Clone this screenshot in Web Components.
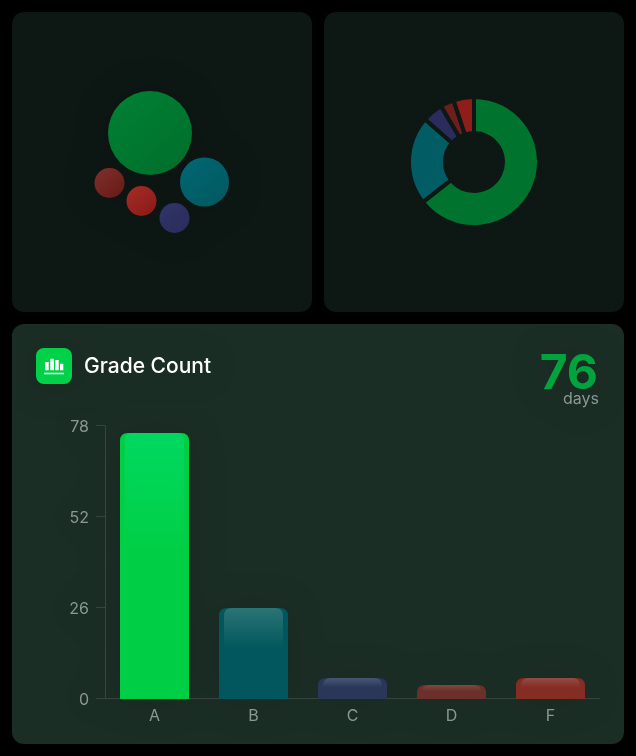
<!DOCTYPE html>
<html>
<head>
<meta charset="utf-8">
<title>Grade Count</title>
<style>
  html, body { margin: 0; background: #000; }
  body { width: 636px; height: 756px; font-family: Inter, "Liberation Sans", sans-serif; }
</style>
</head>
<body>
<grade-dashboard>
  <grade-panel>
    <grade-bubbles></grade-bubbles>
  </grade-panel>
  <grade-panel>
    <grade-donut></grade-donut>
  </grade-panel>
  <grade-count-card heading="Grade Count" value="76" unit="days"></grade-count-card>
</grade-dashboard>

<script>
const PANEL_BG = '#0d1714';
const GRADES = [
  { name: 'A', count: 76, bar: '#00cf45', shine: '#00d860', dim: '#00732e' },
  { name: 'B', count: 26, bar: '#01575d', shine: '#2a7474', dim: '#015c64' },
  { name: 'C', count: 6, bar: '#2a3759', shine: '#475677', dim: '#2a2d5c' },
  { name: 'D', count: 4, bar: '#6b3029', shine: '#7f4a3e', dim: '#6d1f1c' },
  { name: 'F', count: 6, bar: '#852c25', shine: '#944d43', dim: '#8f1e1b' }
];

class GradeDashboard extends HTMLElement {
  constructor() {
    super();
    this.attachShadow({ mode: 'open' });
    this.shadowRoot.innerHTML = `
      <style>
        :host {
          display: grid;
          grid-template-columns: 300px 300px;
          grid-template-rows: 300px 420px;
          gap: 12px;
          padding: 12px;
        }
        ::slotted(grade-count-card) { grid-column: 1 / 3; }
      </style>
      <slot></slot>
    `;
  }
}

class GradePanel extends HTMLElement {
  constructor() {
    super();
    this.attachShadow({ mode: 'open' });
    this.shadowRoot.innerHTML = `
      <style>
        :host {
          display: block;
          background: ${PANEL_BG};
          border-radius: 12px;
          overflow: hidden;
        }
      </style>
      <slot></slot>
    `;
  }
}

class GradeBubbles extends HTMLElement {
  constructor() {
    super();
    this.attachShadow({ mode: 'open' });
    // centres are relative to the panel
    const bubbles = [
      { x: 138, y: 121, r: 42, from: '#007f33', to: '#00702c' },
      { x: 192.500, y: 170, r: 24.500, from: '#016570', to: '#015a62' },
      { x: 97.500, y: 171, r: 15, from: '#7e2d29', to: '#691c1a' },
      { x: 129.500, y: 189, r: 15, from: '#a12a25', to: '#8c1c19' },
      { x: 162.500, y: 206, r: 15, from: '#2f3366', to: '#2a2d5c' }
    ];
    const defs = bubbles.map((b, i) => `<linearGradient id="bubble${i}" x1="0.150" y1="0.100" x2="0.850" y2="0.900"><stop offset="0" stop-color="${b.from}"/><stop offset="1" stop-color="${b.to}"/></linearGradient>`);
    this.shadowRoot.innerHTML = `
      <style>
        :host { display: block; }
        svg { display: block; filter: drop-shadow(0 0 18px rgba(0, 0, 0, .14)); }
      </style>
      <svg width="300" height="300" viewBox="0 0 300 300">
        <defs>${defs.join('')}</defs>
        ${bubbles.map((b, i) => `<circle cx="${b.x}" cy="${b.y}" r="${b.r}" fill="url(#bubble${i})"/>`).join('')}
      </svg>
    `;
  }
}

class GradeDonut extends HTMLElement {
  constructor() {
    super();
    this.attachShadow({ mode: 'open' });
    const total = GRADES.reduce((sum, g) => sum + g.count, 0);
    const cx = 150, cy = 150, outer = 65, inner = 29;
    const pt = (r, deg) => {
      const a = deg * Math.PI / 180;
      return `${(cx + r * Math.sin(a)).toFixed(2)} ${(cy - r * Math.cos(a)).toFixed(2)}`;
    };
    let start = 0;
    const slices = GRADES.map(g => {
      const end = start + g.count / total * 360;
      const big = end - start > 180 ? 1 : 0;
      const d = `M${pt(outer, start)}A${outer} ${outer} 0 ${big} 1 ${pt(outer, end)}L${pt(inner, end)}A${inner} ${inner} 0 ${big} 0 ${pt(inner, start)}Z`;
      start = end;
      return `<path d="${d}" fill="${g.dim}" stroke="${PANEL_BG}" stroke-width="4"/>`;
    });
    this.shadowRoot.innerHTML = `
      <style>
        :host { display: block; }
        svg { display: block; }
      </style>
      <svg width="300" height="300" viewBox="0 0 300 300">${slices.join('')}</svg>
    `;
  }
}

class GradeCountCard extends HTMLElement {
  constructor() {
    super();
    this.attachShadow({ mode: 'open' });
  }

  connectedCallback() {
    this.render();
  }

  render() {
    const heading = this.getAttribute('heading') || '';
    const value = this.getAttribute('value') || '';
    const unit = this.getAttribute('unit') || '';
    this.shadowRoot.innerHTML = `
      <style>
        :host {
          display: block;
          box-sizing: border-box;
          background: #1b2e25;
          border-radius: 12px;
          overflow: hidden;
          font-family: Inter, "Liberation Sans", sans-serif;
        }
        .head {
          display: flex;
          justify-content: space-between;
          padding: 24px 24px 0;
          height: 84px;
          box-sizing: border-box;
        }
        .title { display: flex; align-items: center; gap: 12px; height: 36px; filter: drop-shadow(0 0 18px rgba(0, 0, 0, .2)); }
        .title svg { display: block; }
        h2 { margin: 0; font-size: 21px; line-height: 24px; font-weight: 500; color: #fff; }
        .stat { display: flex; flex-direction: column; align-items: flex-end; margin-top: 7px; filter: drop-shadow(0 0 18px rgba(0, 0, 0, .2)); }
        .value { font-size: 48px; line-height: 34px; font-weight: 700; color: #00a33e; margin-right: 2px; }
        .unit { font-size: 16px; line-height: 18px; color: #8b9792; margin-right: 1px; }
      </style>
      <div class="head">
        <div class="title">
          <svg width="36" height="36" viewBox="0 0 36 36">
            <rect width="36" height="36" rx="8" fill="#00d149"/>
            <path d="M9 14h3.700v8.300h-3.700zM14.300 10.700h3.700v11.600h-3.700zM19.300 12h3.400v10.300h-3.400zM24 15.700h3.300v6.600h-3.300zM8 24.700h20v1.600h-20z" fill="#fff"/>
          </svg>
          <h2>${heading}</h2>
        </div>
        <div class="stat">
          <span class="value">${value}</span>
          <span class="unit">${unit}</span>
        </div>
      </div>
      <grade-bars></grade-bars>
    `;
  }
}

class GradeBars extends HTMLElement {
  constructor() {
    super();
    this.attachShadow({ mode: 'open' });
    const top = 18, zero = 291, left = 93, step = 99, barW = 69; // zero line is 273 below the top tick
    const perUnit = (zero - top) / 78;
    // lines sit on the half pixel so they stay 1px wide
    const ticks = [78, 52, 26, 0].map(v => {
      const y = zero - v * perUnit;
      return `<line x1="84" x2="93" y1="${y - 0.5}" y2="${y - 0.5}"/><text class="tick" x="77" y="${y + 5.5}" text-anchor="end">${v}</text>`;
    }).join('');
    const defs = [];
    const bars = GRADES.map((g, i) => {
      const h = g.count * perUnit;
      const x = left + 15 + i * step;
      const y = zero - h;
      const r = 8;
      const body = `M${x} ${zero}V${y + r}Q${x} ${y} ${x + r} ${y}H${x + barW - r}Q${x + barW} ${y} ${x + barW} ${y + r}V${zero}Z`;
      const sx = x + 5, sw = barW - 10, sh = h * 0.45;
      const shine = `M${sx} ${y + sh}V${Math.min(y + r, y + sh)}Q${sx} ${y} ${sx + r} ${y}H${sx + sw - r}Q${sx + sw} ${y} ${sx + sw} ${Math.min(y + r, y + sh)}V${y + sh}Z`;
      defs.push(`<linearGradient id="shine${i}" x1="0" y1="0" x2="0" y2="1"><stop offset="0" stop-color="${g.shine}"/><stop offset="1" stop-color="${g.shine}" stop-opacity="0"/></linearGradient>`);
      const cx = x + barW / 2;
      return `<path d="${body}" fill="${g.bar}"/><path d="${shine}" fill="url(#shine${i})"/><text class="cat" x="${cx}" y="${zero + 21.5}" text-anchor="middle">${g.name}</text>`;
    }).join('');
    this.shadowRoot.innerHTML = `
      <style>
        :host { display: block; }
        svg { display: block; }
        .plot { filter: drop-shadow(0 0 18px rgba(0, 0, 0, .14)); }
        line { stroke: #36463e; stroke-width: 1; }
        text { font-family: Inter, "Liberation Sans", sans-serif; fill: #8b9792; }
        .tick { font-size: 16px; }
        .cat { font-size: 16px; }
      </style>
      <svg width="612" height="336" viewBox="0 0 612 336">
        <defs>${defs.join('')}</defs>
        <g class="plot">
          <line x1="93.500" x2="93.500" y1="${top - 0.5}" y2="${zero - 0.5}"/>
          <line x1="93" x2="588" y1="${zero - 0.5}" y2="${zero - 0.5}"/>
          ${ticks}
          ${bars}
        </g>
      </svg>
    `;
  }
}

customElements.define('grade-dashboard', GradeDashboard);
customElements.define('grade-panel', GradePanel);
customElements.define('grade-bubbles', GradeBubbles);
customElements.define('grade-donut', GradeDonut);
customElements.define('grade-count-card', GradeCountCard);
customElements.define('grade-bars', GradeBars);
</script>
</body>
</html>
